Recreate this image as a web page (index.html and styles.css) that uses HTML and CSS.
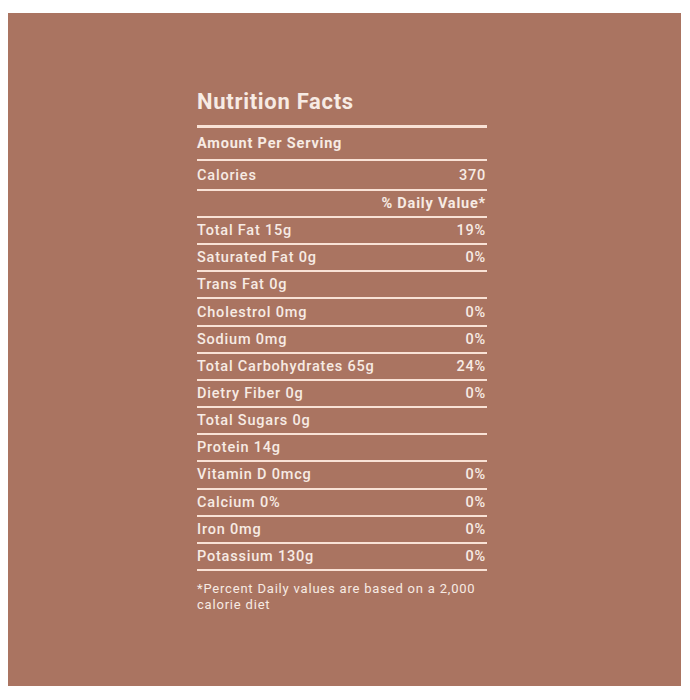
FILE: index.html
```html
<!DOCTYPE html>
<html>
<head>
<meta charset="utf-8">
<link rel="stylesheet" href="styles.css">
</head>
<body>
<div class="page">
  <div class="panel">
    <div class="label">
      <h1 class="title">Nutrition Facts</h1>
      <div class="rule-thick"></div>
      <div class="row row-amount"><span class="bold">Amount Per Serving</span></div>
      <div class="row row-cal"><span>Calories</span><span class="val">370</span></div>
      <div class="row row-dv"><span></span><span class="bold">% Daily Value*</span></div>
      <div class="row"><span>Total Fat 15g</span><span class="val">19%</span></div>
      <div class="row"><span>Saturated Fat 0g</span><span class="val">0%</span></div>
      <div class="row"><span>Trans Fat 0g</span><span class="val"></span></div>
      <div class="row"><span>Cholestrol 0mg</span><span class="val">0%</span></div>
      <div class="row"><span>Sodium 0mg</span><span class="val">0%</span></div>
      <div class="row"><span>Total Carbohydrates 65g</span><span class="val">24%</span></div>
      <div class="row"><span>Dietry Fiber 0g</span><span class="val">0%</span></div>
      <div class="row"><span>Total Sugars 0g</span><span class="val"></span></div>
      <div class="row"><span>Protein 14g</span><span class="val"></span></div>
      <div class="row"><span>Vitamin D 0mcg</span><span class="val">0%</span></div>
      <div class="row"><span>Calcium 0%</span><span class="val">0%</span></div>
      <div class="row"><span>Iron 0mg</span><span class="val">0%</span></div>
      <div class="row"><span>Potassium 130g</span><span class="val">0%</span></div>
      <p class="note">*Percent Daily values are based on a 2,000 calorie diet</p>
    </div>
  </div>
</div>
</body>
</html>
```
FILE: styles.css
```css
html, body {
  margin: 0;
  padding: 0;
  background: #ffffff;
}
.page {
  padding: 13px 0 0 8px;
}
.panel {
  width: 673px;
  height: 673px;
  background: #aa7461;
  box-sizing: border-box;
  padding: 0 0 0 189px;
  font-family: Roboto, "Liberation Sans", sans-serif;
  color: #f7ebe4;
}
.label {
  width: 290px;
  display: flex;
  flex-direction: column;
}
.title {
  margin: 0;
  padding-top: 77px;
  height: 35px;
  font-size: 22px;
  line-height: 24px;
  font-weight: 700;
  letter-spacing: 0.7px;
}
.rule-thick {
  height: 3px;
  background: #f9e2d6;
}
.row {
  display: flex;
  justify-content: space-between;
  align-items: center;
  height: 25.17px;
  border-bottom: 2px solid #f9e2d6;
  font-size: 14.5px;
  font-weight: 500;
  letter-spacing: 0.8px;
  padding-right: 1px;
}
.row-amount {
  height: 31px;
}
.row-cal {
  height: 28px;
}
.row-dv {
  height: 25px;
}
.bold {
  font-weight: 700;
}
.val {
  text-align: right;
}
.note {
  margin: 10px 0 0 0;
  font-size: 13px;
  line-height: 16px;
  font-weight: 400;
  letter-spacing: 0.8px;
  padding-right: 0;
}
```
